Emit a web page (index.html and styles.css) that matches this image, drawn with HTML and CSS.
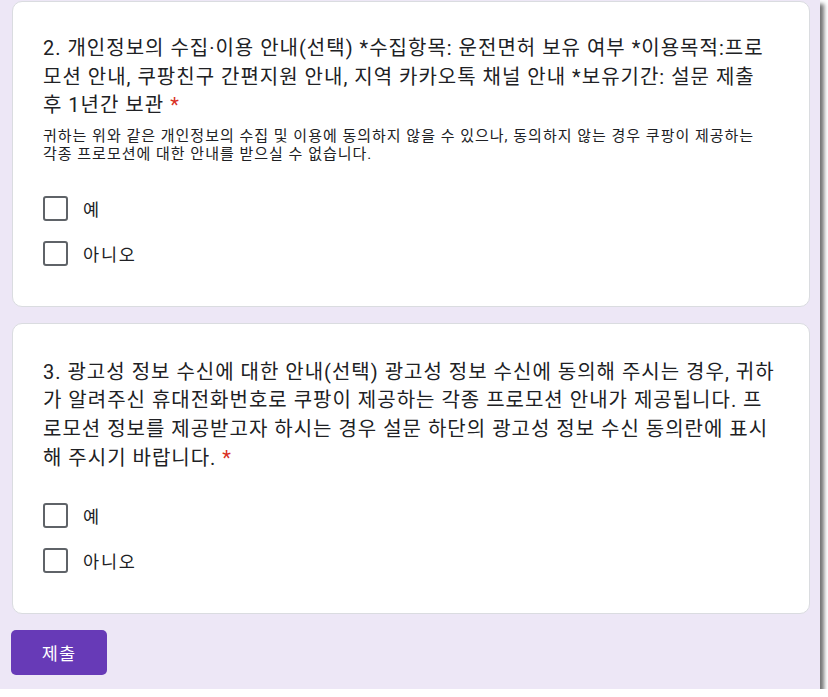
FILE: index.html
```html
<!DOCTYPE html>
<html lang="ko">
<head>
<meta charset="utf-8">
<title>설문</title>
<link rel="stylesheet" href="styles.css">
</head>
<body>
<div class="frame">
  <div class="card">
    <div class="title">2. 개인정보의 수집·이용 안내(선택) *수집항목: 운전면허 보유 여부 *이용목적:프로<br>모션 안내, 쿠팡친구 간편지원 안내, 지역 카카오톡 채널 안내 *보유기간: 설문 제출<br>후 1년간 보관 <span class="req">*</span></div>
    <div class="desc">귀하는 위와 같은 개인정보의 수집 및 이용에 동의하지 않을 수 있으나, 동의하지 않는 경우 쿠팡이 제공하는<br>각종 프로모션에 대한 안내를 받으실 수 없습니다.</div>
    <div class="options">
      <div class="option"><span class="box"></span><span class="label">예</span></div>
      <div class="option"><span class="box"></span><span class="label">아니오</span></div>
    </div>
  </div>
  <div class="card card2">
    <div class="title">3. 광고성 정보 수신에 대한 안내(선택) 광고성 정보 수신에 동의해 주시는 경우, 귀하<br>가 알려주신 휴대전화번호로 쿠팡이 제공하는 각종 프로모션 안내가 제공됩니다. 프<br>로모션 정보를 제공받고자 하시는 경우 설문 하단의 광고성 정보 수신 동의란에 표시<br>해 주시기 바랍니다. <span class="req">*</span></div>
    <div class="options">
      <div class="option"><span class="box"></span><span class="label">예</span></div>
      <div class="option"><span class="box"></span><span class="label">아니오</span></div>
    </div>
  </div>
  <div class="actions">
    <button class="submit" type="button">제출</button>
  </div>
</div>
</body>
</html>
```
FILE: styles.css
```css
html, body {
  margin: 0;
  padding: 0;
  background: #ffffff;
}
body {
  font-family: Roboto, "Noto Sans CJK KR", sans-serif;
  color: #202124;
}
.frame {
  width: 820px;
  height: 689px;
  box-sizing: border-box;
  background: #ede7f6;
  padding: 1px 10px 0 11px;
  box-shadow: 4px 4px 4px rgba(0, 0, 0, 0.55);
  display: flex;
  flex-direction: column;
}
.card {
  margin-left: 1px;
  width: 798px;
  box-sizing: border-box;
  background: #ffffff;
  border: 1px solid #dadce0;
  border-radius: 10px;
  padding: 32px 12px 30px 30px;
  white-space: nowrap;
}
.card2 {
  margin-top: 16px;
  padding-top: 34px;
}
.title {
  font-size: 20px;
  line-height: 28.6px;
  letter-spacing: 1px;
}
.req {
  color: #d93025;
}
.desc {
  margin-top: 7px;
  font-size: 15px;
  line-height: 18px;
  letter-spacing: 1px;
}
.options {
  margin-top: 23px;
  display: flex;
  flex-direction: column;
}
.card2 .options {
  margin-top: 21px;
}
.option {
  height: 45px;
  display: flex;
  align-items: center;
  gap: 15px;
}
.box {
  width: 25px;
  height: 25px;
  box-sizing: border-box;
  border: 2.5px solid #5f6368;
  border-radius: 3px;
  flex: none;
}
.label {
  font-size: 17.5px;
  letter-spacing: 1.8px;
}
.actions {
  margin-top: 16px;
}
.submit {
  width: 96px;
  height: 45px;
  border: none;
  border-radius: 5px;
  background: #673ab7;
  color: #ffffff;
  font-family: Roboto, "Noto Sans CJK KR", sans-serif;
  font-size: 17.5px;
  letter-spacing: 1.2px;
  padding: 0;
}
```
